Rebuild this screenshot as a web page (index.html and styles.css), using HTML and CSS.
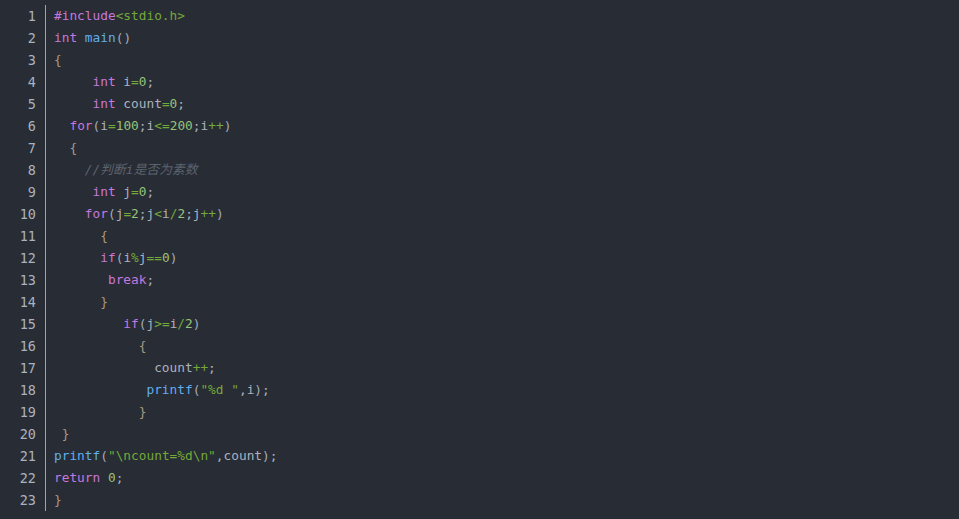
FILE: index.html
```html
<!DOCTYPE html>
<html>
<head>
<meta charset="utf-8">
<link rel="stylesheet" href="styles.css">
</head>
<body>
<div class="block">
<ul class="gutter">
<li>1</li><li>2</li><li>3</li><li>4</li><li>5</li><li>6</li><li>7</li><li>8</li><li>9</li><li>10</li><li>11</li><li>12</li><li>13</li><li>14</li><li>15</li><li>16</li><li>17</li><li>18</li><li>19</li><li>20</li><li>21</li><li>22</li><li>23</li>
</ul>
<pre class="code"><span class="ln"><span class="kw">#include</span><span class="str">&lt;stdio.h&gt;</span></span><span class="ln"><span class="kw">int</span> <span class="fn">main</span><span class="p">()</span></span><span class="ln"><span class="br">{</span></span><span class="ln">     <span class="kw">int</span> i<span class="op">=</span><span class="num">0</span>;</span><span class="ln">     <span class="kw">int</span> count<span class="op">=</span><span class="num">0</span>;</span><span class="ln">  <span class="kw">for</span><span class="p">(</span>i<span class="op">=</span><span class="num">100</span>;i<span class="op">&lt;=</span><span class="num">200</span>;i<span class="op">++</span><span class="p">)</span></span><span class="ln">  <span class="br">{</span></span><span class="ln">    <span class="cm">//判断i是否为素数</span></span><span class="ln">     <span class="kw">int</span> j<span class="op">=</span><span class="num">0</span>;</span><span class="ln">    <span class="kw">for</span><span class="p">(</span>j<span class="op">=</span><span class="num">2</span>;j<span class="op">&lt;</span>i<span class="op">/</span><span class="num">2</span>;j<span class="op">++</span><span class="p">)</span></span><span class="ln">      <span class="br">{</span></span><span class="ln">      <span class="kw">if</span><span class="p">(</span>i<span class="op">%</span>j<span class="op">==</span><span class="num">0</span><span class="p">)</span></span><span class="ln">       <span class="kw">break</span>;</span><span class="ln">      <span class="br">}</span></span><span class="ln">         <span class="kw">if</span><span class="p">(</span>j<span class="op">&gt;=</span>i<span class="op">/</span><span class="num">2</span><span class="p">)</span></span><span class="ln">           <span class="br">{</span></span><span class="ln">             count<span class="op">++</span>;</span><span class="ln">            <span class="fn">printf</span><span class="p">(</span><span class="str">"%d "</span>,i<span class="p">)</span>;</span><span class="ln">           <span class="br">}</span></span><span class="ln"> <span class="br">}</span></span><span class="ln"><span class="fn">printf</span><span class="p">(</span><span class="str">"\ncount=%d\n"</span>,count<span class="p">)</span>;</span><span class="ln"><span class="kw">return</span> <span class="num">0</span>;</span><span class="ln"><span class="br">}</span></span></pre>
</div>
</body>
</html>
```

FILE: styles.css
```css
html, body {
  margin: 0;
  padding: 0;
  background: #282c34;
  height: 100%;
}
.block {
  display: flex;
  align-items: flex-start;
  padding-top: 5px;
  font-family: "DejaVu Sans Mono", "Liberation Mono", "Noto Sans CJK SC", monospace;
  font-size: 12.8px;
  line-height: 22px;
}
.gutter {
  list-style: none;
  margin: 0;
  padding: 0 9px 0 0;
  width: 46px;
  box-sizing: border-box;
  border-right: 1px solid #9ea3aa;
  color: #abb2bf;
  text-align: right;
  font-size: 13.5px;
}
.gutter li {
  height: 22px;
}
.code {
  margin: 0 0 0 8px;
  font: inherit;
  color: #abb2bf;
}
.ln {
  display: block;
  height: 22px;
}
.kw { color: #c678dd; }
.fn { color: #61aeee; }
.str { color: #74a83a; }
.op { color: #74a83a; }
.num { color: #98c379; }
.p { color: #a3abb8; }
.br { color: #a89a86; }
.cm {
  color: #5c6370;
  font-style: italic;
  font-family: "DejaVu Sans Mono", "Noto Sans CJK SC", monospace;
}
```
